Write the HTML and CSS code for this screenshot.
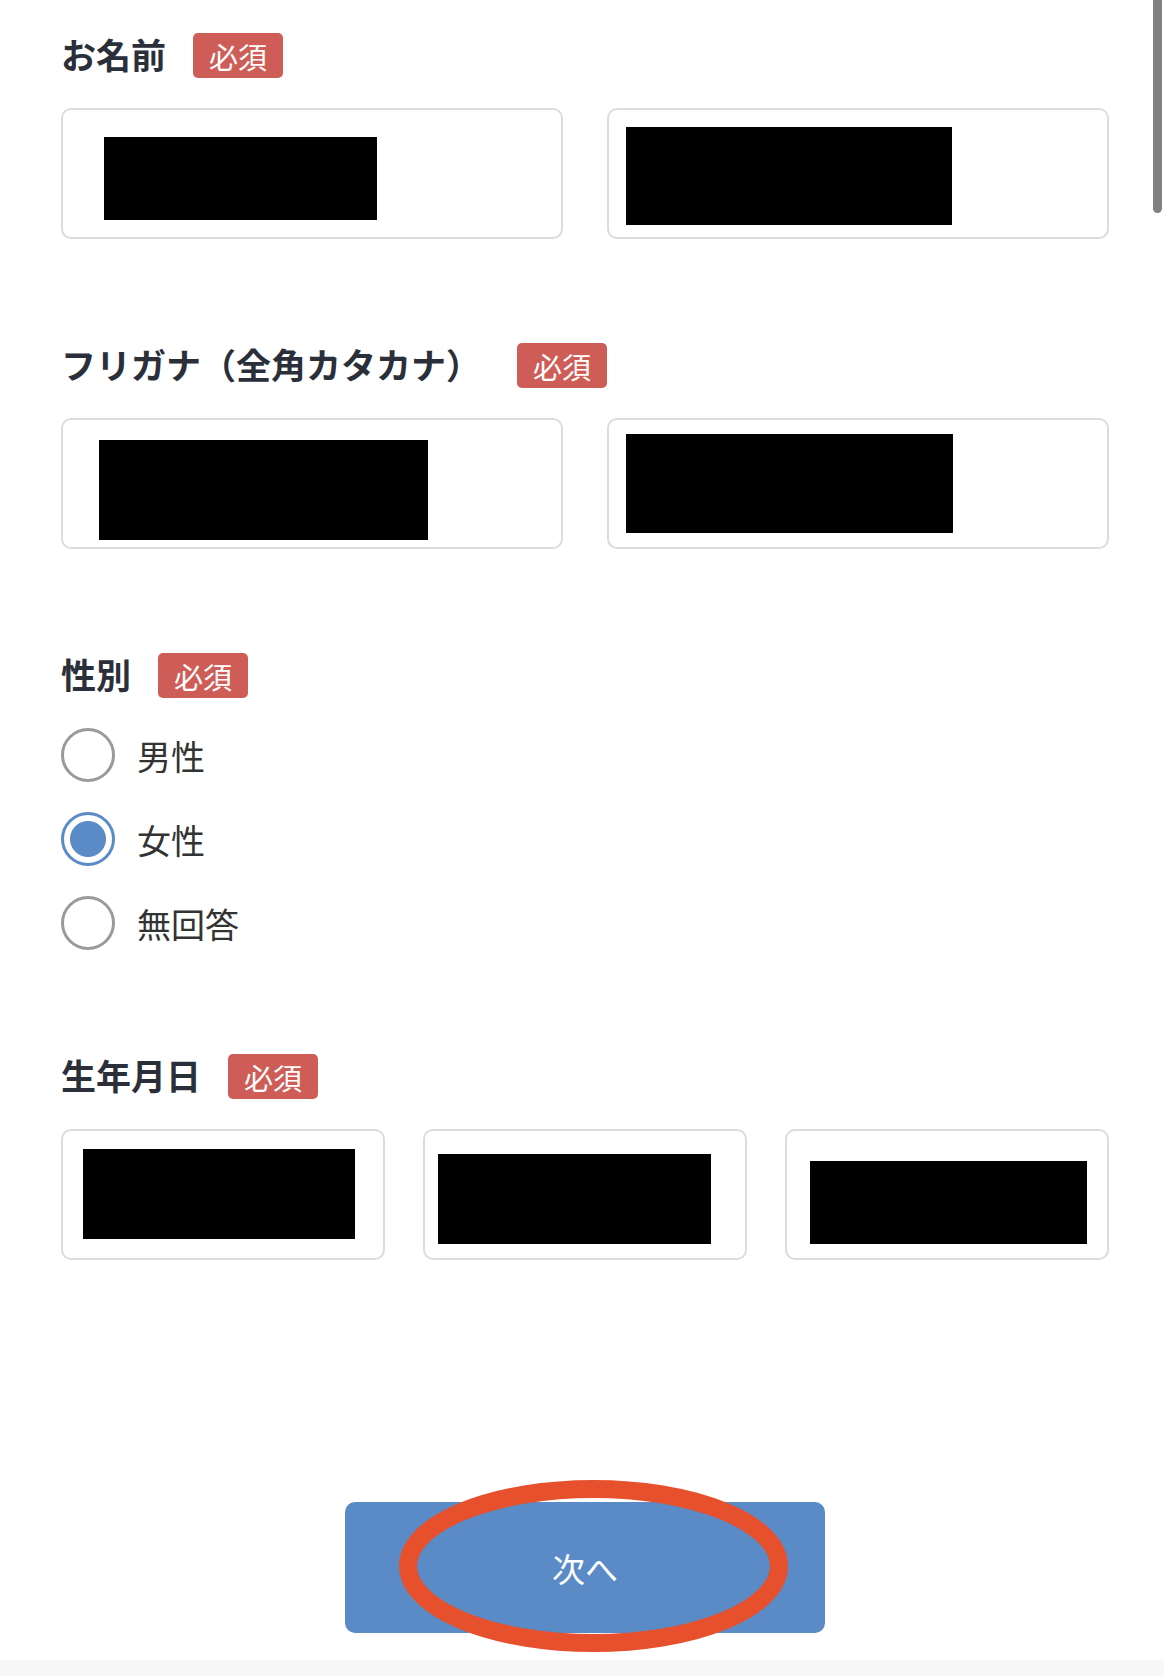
FILE: index.html
```html
<!DOCTYPE html>
<html lang="ja">
<head>
  <meta charset="UTF-8" />
  <title>会員登録</title>
  <link rel="stylesheet" href="styles.css">
</head>
<body>

  <main class="form">
    <section class="field">
      <div class="field-head">
        <h2 class="field-label">お名前</h2>
        <span class="badge">必須</span>
      </div>
      <div class="inputs inputs-2">
        <div class="input"><span class="redact redact-last"></span></div>
        <div class="input"><span class="redact redact-first"></span></div>
      </div>
    </section>

    <section class="field">
      <div class="field-head">
        <h2 class="field-label">フリガナ（全角カタカナ）</h2>
        <span class="badge badge-wide">必須</span>
      </div>
      <div class="inputs inputs-2">
        <div class="input"><span class="redact redact-kana-last"></span></div>
        <div class="input"><span class="redact redact-kana-first"></span></div>
      </div>
    </section>

    <section class="field">
      <div class="field-head">
        <h2 class="field-label">性別</h2>
        <span class="badge">必須</span>
      </div>
      <div class="radios">
        <label class="radio"><span class="radio-mark"></span>男性</label>
        <label class="radio"><span class="radio-mark checked"></span>女性</label>
        <label class="radio"><span class="radio-mark"></span>無回答</label>
      </div>
    </section>

    <section class="field">
      <div class="field-head">
        <h2 class="field-label">生年月日</h2>
        <span class="badge">必須</span>
      </div>
      <div class="inputs inputs-3">
        <div class="input"><span class="redact redact-year"></span></div>
        <div class="input"><span class="redact redact-month"></span></div>
        <div class="input"><span class="redact redact-day"></span></div>
      </div>
    </section>

    <div class="actions">
      <div class="btn-wrap">
        <button type="button" class="btn-next">次へ</button>
        <!-- annotation circle -->
        <svg class="mark" width="389" height="172" viewBox="0 0 389 172">
          <ellipse cx="194.5" cy="86" rx="185.5" ry="77" fill="none" stroke="#e6502d" stroke-width="18" />
        </svg>
      </div>
    </div>
  </main>

  <div class="bottom-bar"></div>
  <div class="scrollbar"></div>

</body>
</html>
```

FILE: styles.css
```css
html, body {
  overflow: hidden;
}

body {
  margin: 0;
  font-family: "Noto Sans CJK JP", "Noto Sans", sans-serif;
  background-color: #fff;
  color: #333;
}

.form {
  padding: 33px 55px 0 61px;
}

.field {
  margin-bottom: 104px;
}

.field-head {
  display: flex;
  align-items: center;
  height: 45px;
  margin-bottom: 30px;
}

.field-label {
  margin: 0;
  margin-top: -4px;
  font-size: 35px;
  font-weight: 700;
  line-height: 1;
  color: #2a2f3a;
}

.badge {
  display: flex;
  align-items: center;
  justify-content: center;
  width: 90px;
  height: 45px;
  margin-left: 27px;
  background-color: #cf5d57;
  color: #fff;
  font-size: 29px;
  border-radius: 5px;
}

.badge-wide {
  margin-left: 36px;
}

.inputs {
  display: grid;
}

.inputs-2 {
  grid-template-columns: 1fr 1fr;
  gap: 44px;
}

.inputs-3 {
  grid-template-columns: 1fr 1fr 1fr;
  gap: 38px;
}

.input {
  height: 131px;
  box-sizing: border-box;
  border: 2px solid #dcdcdc;
  border-radius: 10px;
  background: #fff;
}

.redact {
  display: block;
  background: #000;
}

.redact-last { width: 273px; height: 83px; margin: 27px 0 0 41px; }
.redact-first { width: 326px; height: 98px; margin: 17px 0 0 17px; }
.redact-kana-last { width: 329px; height: 100px; margin: 20px 0 0 36px; }
.redact-kana-first { width: 327px; height: 99px; margin: 14px 0 0 17px; }
.redact-year { width: 272px; height: 90px; margin: 18px 0 0 20px; }
.redact-month { width: 273px; height: 90px; margin: 23px 0 0 13px; }
.redact-day { width: 277px; height: 83px; margin: 30px 0 0 23px; }

.radios {
  display: flex;
  flex-direction: column;
  gap: 30px;
}

.radio {
  display: flex;
  align-items: center;
  height: 54px;
  font-size: 34px;
  color: #333;
}

.radio-mark {
  flex-shrink: 0;
  width: 54px;
  height: 54px;
  box-sizing: border-box;
  margin-right: 22px;
  border: 3px solid #9a9a9a;
  border-radius: 50%;
  background: #fff;
}

.radio-mark.checked {
  border-color: #5a8bc7;
  background: radial-gradient(circle, #5a8bc7 0 17.5px, #fff 18.5px);
}

.actions {
  display: flex;
  justify-content: center;
  margin-top: 242px;
}

.btn-wrap {
  position: relative;
}

.btn-next {
  display: block;
  width: 480px;
  height: 131px;
  border: none;
  border-radius: 10px;
  background-color: #5a8bc7;
  color: #fff;
  font-family: inherit;
  font-size: 33px;
  cursor: pointer;
}

.mark {
  position: absolute;
  left: 54px;
  top: -22px;
  pointer-events: none;
}

.bottom-bar {
  height: 16px;
  margin-top: 27px;
  background: #f7f7f7;
}

.scrollbar {
  position: fixed;
  top: 0;
  right: 2px;
  width: 9px;
  height: 213px;
  background: #808080;
  border-radius: 0 0 5px 5px;
}
```
